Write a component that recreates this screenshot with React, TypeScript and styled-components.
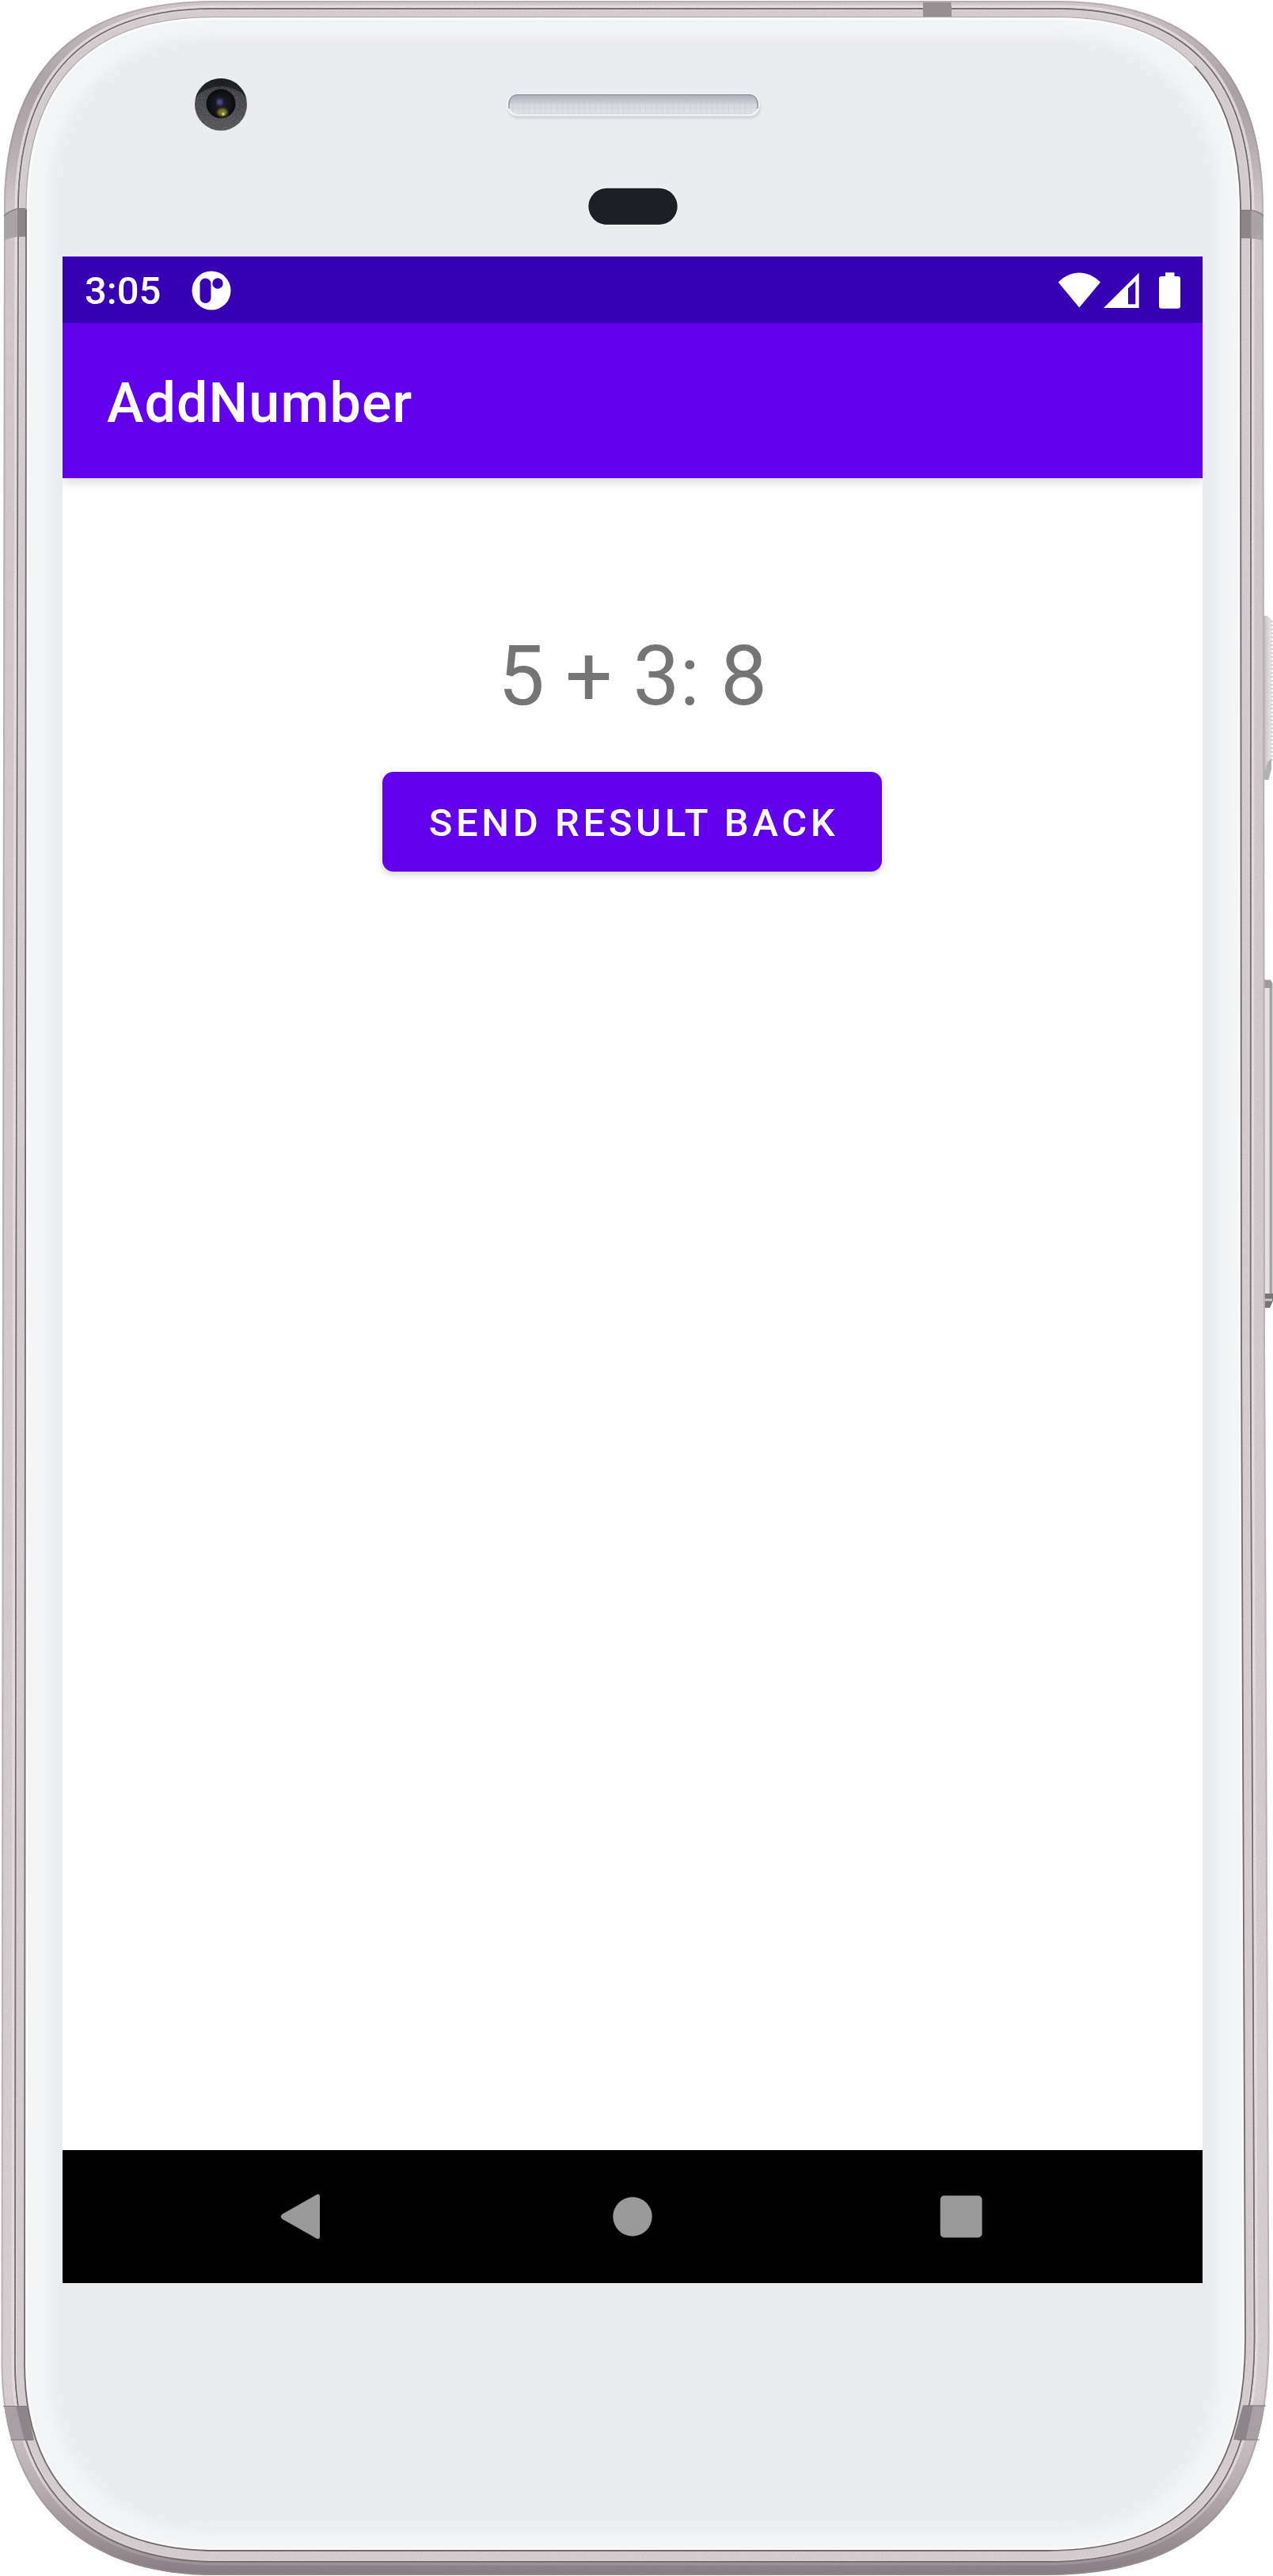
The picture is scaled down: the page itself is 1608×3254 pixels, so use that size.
import React from "react";
import styled, { createGlobalStyle } from "styled-components";

const GlobalStyle = createGlobalStyle`
  body {
    margin: 0;
    background: #ffffff;
    font-family: Roboto, "Liberation Sans", sans-serif;
  }
`;

const Device = styled.main`
  position: relative;
  box-sizing: border-box;
  width: 1608px;
  height: 3254px;
  padding: 324px 89px 370px 79px;
  overflow: hidden;
`;

const FrameArt = styled.svg`
  position: absolute;
  inset: 0;
  width: 1608px;
  height: 3254px;
`;

const Screen = styled.section`
  position: relative;
  display: flex;
  flex-direction: column;
  width: 1440px;
  height: 2560px;
  background: #ffffff;
`;

const StatusBar = styled.header`
  display: flex;
  align-items: center;
  height: 84px;
  box-sizing: border-box;
  padding: 0 27px 0 28px;
  background: #3700b3;
  color: #ffffff;
`;

const Clock = styled.span`
  width: 98px;
  padding-top: 3px;
  font-size: 49px;
  line-height: 58px;
  font-weight: 500;
  white-space: nowrap;
`;

const NotificationIcon = styled.svg`
  width: 50px;
  height: 50px;
  margin: 1px auto 0 37px;
`;

const SystemIcons = styled.svg`
  width: 156px;
  height: 46px;
  padding-top: 1px;
`;

const AppBar = styled.div`
  z-index: 1;
  display: flex;
  align-items: center;
  height: 196px;
  padding-left: 56px;
  background: #6200ee;
  clip-path: inset(0 0 -24px 0);
  box-shadow: 0 4px 14px rgba(0, 0, 0, 0.17);
`;

const AppTitle = styled.h1`
  margin: 0;
  padding-top: 5px;
  color: #ffffff;
  font-size: 70px;
  line-height: 82px;
  font-weight: 500;
  letter-spacing: 1.1px;
`;

const Content = styled.div`
  flex: 1;
  display: flex;
  flex-direction: column;
  align-items: center;
  padding-top: 182px;
`;

const Result = styled.p`
  margin: 0;
  color: #757575;
  font-size: 105px;
  line-height: 138px;
  white-space: pre;
`;

const SendButton = styled.button`
  width: 631px;
  height: 126px;
  margin: 51px 1px 0 0;
  padding: 3px 0 0 4px;
  border: 0;
  border-radius: 14px;
  background: #6200ee;
  color: #ffffff;
  font-family: inherit;
  font-size: 49px;
  line-height: 58px;
  font-weight: 500;
  letter-spacing: 4.6px;
  text-transform: uppercase;
  white-space: nowrap;
  box-shadow: 0 3px 8px rgba(0, 0, 0, 0.2);
`;

const NavBar = styled.nav`
  display: flex;
  align-items: center;
  justify-content: center;
  gap: 323px;
  height: 168px;
  background: #000000;
`;

const NavIcon = styled.svg`
  width: 92px;
  height: 92px;
  fill: #999999;
`;

const OUTER =
  "M270 1 L1335 1 C1509 1 1596 89 1596 265 L1597 900 L1598 1700 L1603.5 2954 C1603.5 3155 1520 3253 1320 3253 L270 3253 C100 3253 1.5 3154 1.5 2985 L3 1600 L5 265 C5 89 94 1 270 1 Z";
const SEAM =
  "M270 11 L1335 11 C1498 11 1580 98 1580 265 L1579.5 1700 L1584.5 2954 C1584.5 3148 1500 3236 1320 3236 L275 3236 C112 3236 19 3143 19 2985 L20.5 1600 L23 265 C23 99 106 11 270 11 Z";
const GLASS =
  "M270 21.5 L1335 21.5 C1490 21.5 1567 106 1567 265 L1568 1700 L1573 2954 C1573 3138 1493 3222 1320 3222 L275 3222 C120 3222 31 3138 31 2985 L32 1600 L33 265 C33 106 112 21.5 270 21.5 Z";

function PhoneFrame() {
  return (
    <FrameArt viewBox="0 0 1608 3254" aria-hidden="true">
      <defs>
        <linearGradient id="metal" gradientUnits="userSpaceOnUse" x1="0" y1="0" x2="0" y2="3254">
          <stop offset="0" stopColor="#d5ced0" />
          <stop offset="0.012" stopColor="#c1b9bc" />
          <stop offset="0.035" stopColor="#aaa2a6" />
          <stop offset="0.055" stopColor="#b6adb1" />
          <stop offset="0.08" stopColor="#d2cacd" />
          <stop offset="0.93" stopColor="#d9d1d4" />
          <stop offset="0.962" stopColor="#bdb3b7" />
          <stop offset="0.984" stopColor="#9e9398" />
          <stop offset="1" stopColor="#857a80" />
        </linearGradient>
        <linearGradient id="shine" gradientUnits="userSpaceOnUse" x1="0" y1="0" x2="0" y2="3254">
          <stop offset="0" stopColor="#ece7e9" />
          <stop offset="0.96" stopColor="#ebe4e6" />
          <stop offset="0.985" stopColor="#b2a7ac" />
          <stop offset="1" stopColor="#9b9095" />
        </linearGradient>
        <linearGradient id="speaker" x1="0" y1="0" x2="0" y2="1">
          <stop offset="0" stopColor="#a7abb4" />
          <stop offset="0.3" stopColor="#c0c3ca" />
          <stop offset="0.55" stopColor="#d8dae0" />
          <stop offset="1" stopColor="#e2e4e8" />
        </linearGradient>
        <linearGradient id="power" x1="0" y1="0" x2="1" y2="0">
          <stop offset="0" stopColor="#aaa8a8" />
          <stop offset="0.45" stopColor="#d0d2d2" />
          <stop offset="1" stopColor="#e4e6e6" />
        </linearGradient>
        <linearGradient id="volume" x1="0" y1="0" x2="1" y2="0">
          <stop offset="0" stopColor="#b3b1b1" />
          <stop offset="0.25" stopColor="#e2e5e2" />
          <stop offset="0.6" stopColor="#dfe2df" />
          <stop offset="0.78" stopColor="#8f8f8f" />
          <stop offset="1" stopColor="#dddddd" />
        </linearGradient>
        <radialGradient id="lens" cx="0.5" cy="0.5" r="0.5">
          <stop offset="0" stopColor="#20203a" />
          <stop offset="0.6" stopColor="#14161b" />
          <stop offset="1" stopColor="#090b0e" />
        </radialGradient>
        <linearGradient id="cameraRing" x1="0" y1="0" x2="0" y2="1">
          <stop offset="0" stopColor="#1b1d20" />
          <stop offset="0.25" stopColor="#393b3f" />
          <stop offset="1" stopColor="#505256" />
        </linearGradient>
        <pattern id="mesh" width="7" height="7" patternUnits="userSpaceOnUse">
          <path d="M0 3.5H7M3.5 0V7" stroke="#bcbec6" strokeWidth="1.2" opacity="0.35" />
        </pattern>
        <filter id="soft" x="-5%" y="-5%" width="110%" height="110%">
          <feGaussianBlur stdDeviation="8" />
        </filter>
        <filter id="softSmall" x="-5%" y="-20%" width="110%" height="150%">
          <feGaussianBlur stdDeviation="1.8" />
        </filter>
        <filter id="grain" x="0" y="0" width="100%" height="100%">
          <feTurbulence type="fractalNoise" baseFrequency="0.7" numOctaves="2" seed="4" />
          <feColorMatrix values="0 0 0 0 0.35  0 0 0 0 0.3  0 0 0 0 0.32  0.8 0 0 0 -0.25" />
        </filter>
        <clipPath id="outerClip">
          <path d={OUTER} />
        </clipPath>
        <clipPath id="seamClip">
          <path d={SEAM} />
        </clipPath>
        <clipPath id="glassClip">
          <path d={GLASS} />
        </clipPath>
        <clipPath id="cameraClip">
          <circle cx="279" cy="132" r="33" />
        </clipPath>
      </defs>

      {/* side keys */}
      <path d="M1595 778 H1601 L1606 782 V970 L1603 985 H1595 Z" fill="url(#power)" />
      <path d="M1606.5 784 V962" stroke="#c4c6c6" strokeWidth="2" strokeDasharray="2 3" />
      <path d="M1602 962 L1606 958 V972 L1602 985 H1597 V975 Z" fill="#aeb1b5" />
      <path d="M1595 1237 H1604 L1608 1242 V1642 L1604 1652 H1595 Z" fill="url(#volume)" />
      <path d="M1597 1238 H1603 L1607 1243 V1248 H1597 Z" fill="#9c9a9a" />
      <path d="M1597 1634 H1608 V1643 L1604 1652 H1597 Z" fill="#777676" />
      <path d="M1597 1642 H1607" stroke="#c9c9c9" strokeWidth="3" />

      {/* metal body */}
      <path d={OUTER} fill="url(#metal)" />
      <g clipPath="url(#outerClip)">
        <path d={OUTER} fill="none" stroke="#9b9296" strokeOpacity="0.45" strokeWidth="4" />
        <path d={SEAM} fill="none" stroke="url(#shine)" strokeOpacity="0.8" strokeWidth="9" />
      </g>
      <path d={SEAM} fill="#d8d1d4" stroke="#756c70" strokeWidth="1.6" />
      <g clipPath="url(#seamClip)">
        <path d={SEAM} fill="none" stroke="#e7e0e3" strokeWidth="4" />
      </g>
      <path d={SEAM} fill="none" stroke="#756c70" strokeWidth="1.8" />
      <g clipPath="url(#outerClip)">
        <rect width="1608" height="3254" filter="url(#grain)" opacity="0.5" />
      </g>

      {/* antenna breaks */}
      <g clipPath="url(#outerClip)">
        <path d="M0 274 Q11 265 23 263 V299 Q11 300 0 307 Z" fill="#aaa4a7" />
        <path d="M22 263 H34 V299 H22 Z" fill="#8d8589" />
        <path d="M1608 278 Q1594 266 1580 265 V301 Q1596 302 1608 310 Z" fill="#aaa4a7" />
        <path d="M1566 265 H1580.5 V301 H1566 Z" fill="#8d8589" />
        <path d="M0 3039 H21 L32 3082.5 H0 Z" fill="#a79fa3" />
        <path d="M20 3039 H34 L43 3082.5 H31 Z" fill="#8e858a" />
        <path d="M1583 3038.5 H1608 V3082 H1573 Z" fill="#a79fa3" />
        <path d="M1570 3038.5 H1583 L1573.5 3082 H1558 Z" fill="#8e858a" />
        <path d="M1166 0 H1201 L1202 9 V22 H1166 Z" fill="#979093" />
        <path d="M1166 0 H1201 V3 H1166 Z" fill="#b5afb1" />
      </g>
      <path d="M5 273 Q14 265 23 263.5 H33 M1567 265.5 H1580 Q1589 267 1596 273 M4 3039.5 H32 M13 3082 H41 M1571 3039 H1599 M1563 3082 H1591" fill="none" stroke="#81797d" strokeWidth="1.2" />

      {/* front glass */}
      <path d={GLASS} fill="#f4f5f6" />
      <g clipPath="url(#glassClip)">
        <rect x="64" y="46" width="1474" height="3152" rx="195" fill="#ebecee" filter="url(#soft)" />
        <path d={GLASS} fill="none" stroke="#ffffff" strokeOpacity="0.6" strokeWidth="7" />
      </g>
      <path d="M33 265 L32 1600 L31 2985 C31 3138 120 3222 275 3222 L1320 3222 C1493 3222 1573 3138 1573 2954 L1568 1700 L1567 265 C1567 185.5 1547.75 124.6 1509 83.6" fill="none" stroke="#71696d" strokeWidth="1.8" />
      <path d="M33 265 C33 106 112 21.5 270 21.5 L1335 21.5 C1412.5 21.5 1470.5 42.6 1509 83.6" fill="none" stroke="#aaa2a6" strokeWidth="1.2" />

      {/* camera */}
      <circle cx="279" cy="132" r="33" fill="url(#cameraRing)" />
      <g clipPath="url(#cameraClip)">
        <rect x="244" y="97" width="70" height="70" filter="url(#grain)" opacity="0.9" />
        <path d="M246 126 A33 33 0 0 1 312 126 L306 118 Q279 100 252 118 Z" fill="#15171a" opacity="0.7" />
      </g>
      <circle cx="279" cy="131" r="18.5" fill="url(#lens)" />
      <circle cx="277.5" cy="129" r="4" fill="#4c4a7d" filter="url(#softSmall)" />
      <ellipse cx="281" cy="142" rx="6.5" ry="5" fill="#7c7c2c" filter="url(#softSmall)" />
      <circle cx="282" cy="144" r="2" fill="#d1be77" />

      {/* earpiece and proximity window */}
      <rect x="641" y="122" width="320" height="28" rx="14" fill="#d0d3d8" filter="url(#softSmall)" />
      <rect x="640" y="118" width="320" height="28.5" rx="14" fill="#f4f5f7" />
      <rect x="642" y="119" width="316" height="25.5" rx="12.75" fill="url(#speaker)" />
      <rect x="642" y="119" width="316" height="25.5" rx="12.75" fill="url(#mesh)" />
      <path d="M643 137 Q641 120 655 119.8 H945 Q959 120 957 137" fill="none" stroke="#9699a4" strokeWidth="1.5" />
      <rect x="742.5" y="236.5" width="114" height="48.5" rx="24" fill="#f7f8f9" />
      <rect x="743.3" y="237.8" width="112.4" height="46" rx="23" fill="#1d1f24" />
    </FrameArt>
  );
}

export default function App() {
  return (
    <>
      <GlobalStyle />
      <Device>
        <PhoneFrame />
        <Screen>
          <StatusBar>
            <Clock>3:05</Clock>
            <NotificationIcon viewBox="0 0 50 50">
              <circle cx="25" cy="25" r="24.5" fill="#ffffff" />
              <rect x="10.5" y="9.5" width="14" height="31.5" rx="7" fill="#3700b3" />
              <circle cx="33" cy="16" r="6.7" fill="#3700b3" />
            </NotificationIcon>
            <SystemIcons viewBox="0 0 156 46" fill="#ffffff">
              <path d="M0.7 12.5 C16.5 -3.5 38 -3.5 54 12.5 L27.3 44.5 Z" />
              <path fillRule="evenodd" d="M58 45 L102.7 0.5 V45 Z M89 20.3 V40.3 H98.3 V11.3 Z" />
              <path d="M136 0.3 H147.5 V5 H152 Q155 5 155 8 V42.8 Q155 45.8 152 45.8 H131 Q128 45.8 128 42.8 V8 Q128 5 131 5 H136 Z" />
            </SystemIcons>
          </StatusBar>
          <AppBar>
            <AppTitle>AddNumber</AppTitle>
          </AppBar>
          <Content>
            <Result>5 + 3: 8</Result>
            <SendButton type="button">Send result back</SendButton>
          </Content>
          <NavBar>
            <NavIcon viewBox="0 0 92 92">
              <path d="M18.5 43 L61.5 18.4 Q66 16.5 66 21 V71 Q66 75.5 61.5 73.6 L18.5 49 Q15 46 18.5 43 Z" />
            </NavIcon>
            <NavIcon viewBox="0 0 92 92">
              <circle cx="46" cy="46" r="24.7" />
            </NavIcon>
            <NavIcon viewBox="0 0 92 92">
              <rect x="19.7" y="19.5" width="52.8" height="53" rx="5" />
            </NavIcon>
          </NavBar>
        </Screen>
      </Device>
    </>
  );
}
